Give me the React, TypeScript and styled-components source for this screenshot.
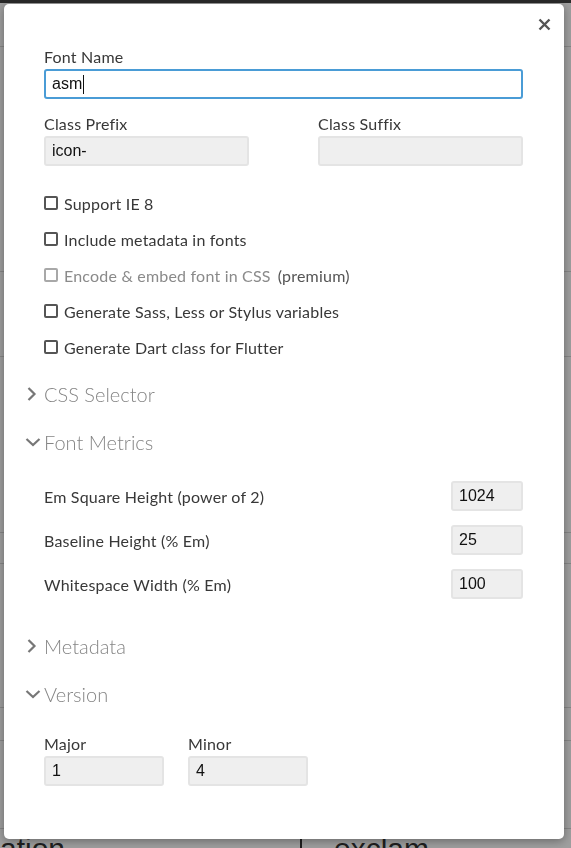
import React from 'react';
import styled, { createGlobalStyle } from 'styled-components';

const GlobalStyle = createGlobalStyle`
  html, body {
    margin: 0;
    padding: 0;
    height: 100%;
    overflow: hidden;
  }
  body {
    font-family: Lato, 'Open Sans', sans-serif;
    background: #fff;
  }
`;

/* page behind the dialog */
const Page = styled.div`
  height: 100vh;
  background: #fff;
  display: flex;
  flex-direction: column;
`;

const TopBar = styled.div`
  height: 3px;
  background: #444;
  flex-shrink: 0;
`;

const BgRow = styled.div<{ $h: number }>`
  height: ${(p) => p.$h}px;
  flex-shrink: 0;
  border-bottom: 1px solid #d8d8d8;
  box-sizing: border-box;
`;

const GlyphStrip = styled.div`
  display: grid;
  grid-template-columns: 300px 1fr;
  flex: 1;
  font-family: 'Liberation Sans', Arial, sans-serif;
  font-size: 30px;
  color: #333;
  .cell {
    line-height: 40px;
  }
  .cell + .cell {
    border-left: 2px solid #333;
    padding-left: 32px;
  }
`;

const Overlay = styled.div`
  position: fixed;
  inset: 0;
  background: rgba(0, 0, 0, 0.38);
`;

const Modal = styled.div`
  position: fixed;
  top: 4px;
  left: 4px;
  width: 560px;
  height: 835px;
  background: #fff;
  border-radius: 5px;
  box-shadow: 0 2px 10px rgba(0, 0, 0, 0.35);
  box-sizing: border-box;
  padding: 44px 41px 0 40px;
  color: #383838;
  font-size: 16px;
  letter-spacing: 0.2px;
`;

const CloseButton = styled.button`
  position: absolute;
  top: 10px;
  right: 10px;
  width: 20px;
  height: 20px;
  padding: 0;
  border: 0;
  background: none;
  display: flex;
  align-items: center;
  justify-content: center;
  cursor: pointer;
`;

const Label = styled.div`
  line-height: 18px;
  margin-bottom: 3px;
`;

const TextBox = styled.div<{ $focus?: boolean; $w?: string }>`
  height: 30px;
  width: ${(p) => p.$w || '100%'};
  box-sizing: border-box;
  border: ${(p) => (p.$focus ? '2px solid #4a9cd6' : '2px solid #e4e4e4')};
  border-radius: 3px;
  background: ${(p) => (p.$focus ? '#fff' : '#efefef')};
  font-family: 'Liberation Sans', Arial, sans-serif;
  font-size: 16px;
  letter-spacing: 0;
  color: #111;
  display: flex;
  align-items: center;
  padding-left: 6px;
  .caret {
    display: inline-block;
    width: 1px;
    height: 19px;
    background: #111;
    margin-left: 1px;
  }
`;

const TwoCols = styled.div`
  display: grid;
  grid-template-columns: 205px 205px;
  justify-content: space-between;
  margin-top: 16px;
`;

const Checks = styled.div`
  display: flex;
  flex-direction: column;
  gap: 18px;
  margin-top: 28px;
`;

const CheckRow = styled.label<{ $disabled?: boolean }>`
  display: flex;
  align-items: center;
  height: 18px;
  color: ${(p) => (p.$disabled ? '#8a8a8a' : '#383838')};
  .box {
    width: 14px;
    height: 14px;
    box-sizing: border-box;
    border: 2px solid ${(p) => (p.$disabled ? '#a8a8a8' : '#555')};
    border-radius: 2px;
    margin-right: 6px;
    flex-shrink: 0;
  }
  .extra {
    color: #555;
    margin-left: 7px;
  }
`;

const SectionHead = styled.div<{ $top: number }>`
  display: flex;
  align-items: center;
  gap: 2px;
  margin-top: ${(p) => p.$top}px;
  margin-left: -20px;
  height: 24px;
  font-size: 20px;
  font-weight: 300;
  letter-spacing: 0;
  color: #858585;
  svg {
    width: 18px;
    height: 18px;
    flex-shrink: 0;
  }
`;

const MetricList = styled.div`
  display: flex;
  flex-direction: column;
  gap: 14px;
  margin-top: 27px;
`;

const MetricRow = styled.div`
  display: flex;
  align-items: center;
  justify-content: space-between;
`;

const VersionRow = styled.div`
  display: flex;
  gap: 24px;
  margin-top: 29px;
`;

const Chevron = ({ open }: { open?: boolean }) => (
  <svg viewBox='0 0 18 18'>
    {open ? (
      <path d='M2.5 6 L9 12 L15.5 6' fill='none' stroke='#777' strokeWidth='2.2' />
    ) : (
      <path d='M4.5 3 L10.5 9 L4.5 15' fill='none' stroke='#777' strokeWidth='2.2' />
    )}
  </svg>
);

const checks = [
  { text: 'Support IE 8' },
  { text: 'Include metadata in fonts' },
  { text: 'Encode & embed font in CSS', extra: '(premium)', disabled: true },
  { text: 'Generate Sass, Less or Stylus variables' },
  { text: 'Generate Dart class for Flutter' },
];

const metrics = [
  { label: 'Em Square Height (power of 2)', value: '1024' },
  { label: 'Baseline Height (% Em)', value: '25' },
  { label: 'Whitespace Width (% Em)', value: '100' },
];

const App = () => {
  return (
    <>
      <GlobalStyle />
      <Page>
        <TopBar />
        <BgRow $h={44} />
        <BgRow $h={225} />
        <BgRow $h={85} />
        <BgRow $h={176} />
        <BgRow $h={31} />
        <BgRow $h={144} />
        <BgRow $h={33} />
        <BgRow $h={88} />
        <GlyphStrip>
          <div className='cell'>ation</div>
          <div className='cell'>exclam</div>
        </GlyphStrip>
      </Page>
      <Overlay />
      <Modal>
        <CloseButton aria-label='close'>
          <svg width='13' height='13' viewBox='0 0 13 13'>
            <path d='M1.5 1.5 L11.5 11.5 M11.5 1.5 L1.5 11.5' stroke='#555' strokeWidth='2.4' />
          </svg>
        </CloseButton>

        <Label>Font Name</Label>
        <TextBox $focus>
          asm<span className='caret' />
        </TextBox>

        <TwoCols>
          <div>
            <Label>Class Prefix</Label>
            <TextBox>icon-</TextBox>
          </div>
          <div>
            <Label>Class Suffix</Label>
            <TextBox />
          </div>
        </TwoCols>

        <Checks>
          {checks.map((c) => (
            <CheckRow key={c.text} $disabled={c.disabled}>
              <span className='box' />
              {c.text}
              {c.extra && <span className='extra'>{c.extra}</span>}
            </CheckRow>
          ))}
        </Checks>

        <SectionHead $top={26}>
          <Chevron />
          CSS Selector
        </SectionHead>
        <SectionHead $top={24}>
          <Chevron open />
          Font Metrics
        </SectionHead>

        <MetricList>
          {metrics.map((m) => (
            <MetricRow key={m.label}>
              {m.label}
              <TextBox $w='72px'>{m.value}</TextBox>
            </MetricRow>
          ))}
        </MetricList>

        <SectionHead $top={35}>
          <Chevron />
          Metadata
        </SectionHead>
        <SectionHead $top={24}>
          <Chevron open />
          Version
        </SectionHead>

        <VersionRow>
          <div>
            <Label>Major</Label>
            <TextBox $w='120px'>1</TextBox>
          </div>
          <div>
            <Label>Minor</Label>
            <TextBox $w='120px'>4</TextBox>
          </div>
        </VersionRow>
      </Modal>
    </>
  );
};

export default App;
